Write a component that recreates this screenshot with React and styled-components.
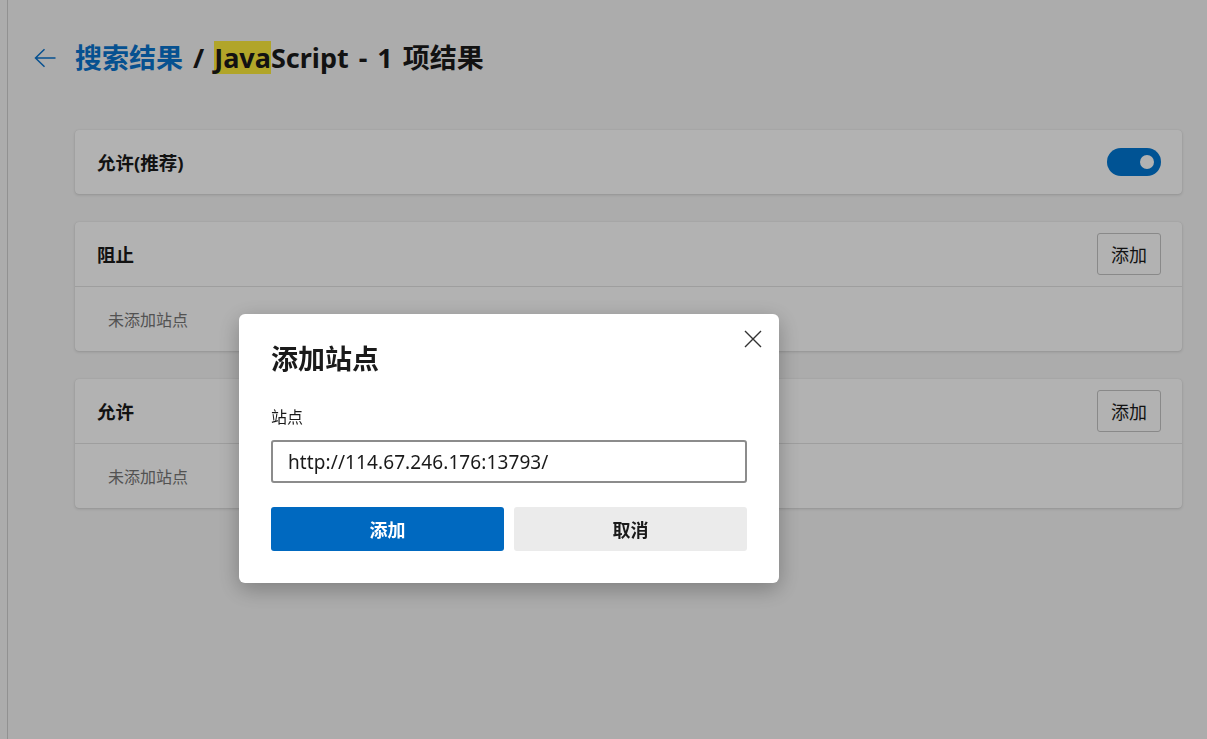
import React from 'react';
import styled, { createGlobalStyle } from 'styled-components';

const GlobalStyle = createGlobalStyle`
    html, body {
        margin: 0;
        padding: 0;
        background: #f6f6f6;
        font-family: "Noto Sans", "Noto Sans CJK SC", sans-serif;
        color: #1a1a1a;
    }
`;

const Page = styled.div`
    display: flex;
    min-height: 100vh;
`;

const Rail = styled.div`
    width: 7px;
    border-right: 1px solid #d0d0d0;
`;

const Main = styled.main`
    flex: 1;
    padding: 40px 25px 0 26px;
`;

const Header = styled.div`
    display: flex;
    align-items: center;
    height: 36px;
`;

const BackButton = styled.button`
    display: flex;
    align-items: center;
    border: none;
    background: none;
    padding: 0;
    margin-right: 19px;
    color: #0a74cf;
    cursor: pointer;
`;

const Title = styled.h1`
    margin: 0;
    font-size: 27px;
    line-height: 36px;
    font-weight: 700;
    word-spacing: 3px;
    white-space: nowrap;
    .crumb {
        color: #0a74cf;
    }
    mark {
        display: inline-block;
        line-height: 33px;
        background: #feec3b;
        color: inherit;
    }
`;

const Cards = styled.div`
    display: flex;
    flex-direction: column;
    gap: 28px;
    margin: 54px 0 0 41px;
`;

const Card = styled.section`
    background: #fff;
    border-radius: 4px;
    box-shadow: 0 1px 3px rgba(0, 0, 0, 0.14), 0 0 1px rgba(0, 0, 0, 0.12);
`;

const CardRow = styled.div`
    display: flex;
    align-items: center;
    justify-content: space-between;
    height: 64px;
    padding: 0 21px 0 22px;
    border-bottom: ${p => (p.$divided ? '1px solid #e3e3e3' : 'none')};
`;

const CardTitle = styled.span`
    font-size: 18.5px;
    font-weight: 700;
`;

const Empty = styled.div`
    display: flex;
    align-items: center;
    height: 64px;
    padding-left: 33px;
    font-size: 16px;
    color: #767676;
`;

const Toggle = styled.span`
    display: flex;
    align-items: center;
    justify-content: flex-end;
    width: 54px;
    height: 28px;
    box-sizing: border-box;
    padding-right: 7px;
    border-radius: 14px;
    background: #0078d4;
    span {
        width: 14px;
        height: 14px;
        border-radius: 50%;
        background: #fff;
    }
`;

const OutlineButton = styled.button`
    width: 64px;
    height: 42px;
    border: 1px solid #c4c4c4;
    border-radius: 3px;
    background: #fff;
    font-family: inherit;
    font-size: 18px;
    color: #1a1a1a;
    padding: 0;
`;

const Overlay = styled.div`
    position: fixed;
    inset: 0;
    background: rgba(0, 0, 0, 0.3);
`;

const Dialog = styled.div`
    position: absolute;
    left: 239px;
    top: 314px;
    width: 540px;
    box-sizing: border-box;
    padding: 27px 32px 32px;
    background: #fff;
    border-radius: 6px;
    box-shadow: 0 6px 22px rgba(0, 0, 0, 0.28);
`;

const CloseButton = styled.button`
    position: absolute;
    top: 13px;
    right: 14px;
    width: 24px;
    height: 24px;
    display: flex;
    align-items: center;
    justify-content: center;
    border: none;
    background: none;
    padding: 0;
    color: #333;
`;

const DialogTitle = styled.h2`
    margin: 0;
    font-size: 27px;
    line-height: 36px;
    font-weight: 700;
`;

const Label = styled.label`
    display: block;
    margin: 29px 0 12px;
    font-size: 16px;
    line-height: 22px;
`;

const Input = styled.input`
    display: block;
    width: 100%;
    height: 43px;
    box-sizing: border-box;
    border: 2px solid #8c8c8c;
    border-radius: 3px;
    padding: 0 15px;
    font-family: inherit;
    font-size: 19px;
    letter-spacing: 0.1px;
    color: #1a1a1a;
    outline: none;
`;

const Actions = styled.div`
    display: grid;
    grid-template-columns: 1fr 1fr;
    gap: 10px;
    margin-top: 24px;
`;

const ActionButton = styled.button`
    height: 44px;
    border: none;
    border-radius: 3px;
    font-family: inherit;
    font-size: 18px;
    font-weight: 700;
    background: ${p => (p.$primary ? '#0069c0' : '#ebebeb')};
    color: ${p => (p.$primary ? '#fff' : '#1a1a1a')};
`;

const sections = [
    { title: '阻止' },
    { title: '允许' },
];

export default function App() {
    return (
        <>
            <GlobalStyle />
            <Page>
                <Rail />
                <Main>
                    <Header>
                        <BackButton aria-label="返回">
                            <svg width="22" height="20" viewBox="0 0 22 20" fill="none" stroke="currentColor" strokeWidth="1.5">
                                <path d="M21.5 10H1.5M10.5 1.3L1.5 10l9 8.7" />
                            </svg>
                        </BackButton>
                        <Title>
                            <span className="crumb">搜索结果</span> / <mark>Java</mark>Script - 1 项结果
                        </Title>
                    </Header>

                    <Cards>
                        <Card>
                            <CardRow>
                                <CardTitle>允许(推荐)</CardTitle>
                                <Toggle><span /></Toggle>
                            </CardRow>
                        </Card>
                        {sections.map(s => (
                            <Card key={s.title}>
                                <CardRow $divided>
                                    <CardTitle>{s.title}</CardTitle>
                                    <OutlineButton>添加</OutlineButton>
                                </CardRow>
                                <Empty>未添加站点</Empty>
                            </Card>
                        ))}
                    </Cards>
                </Main>
            </Page>

            <Overlay>
                <Dialog>
                    <CloseButton aria-label="关闭">
                        <svg width="18" height="18" viewBox="0 0 18 18" stroke="currentColor" strokeWidth="1.4">
                            <path d="M1 1l16 16M17 1L1 17" />
                        </svg>
                    </CloseButton>
                    <DialogTitle>添加站点</DialogTitle>
                    <Label htmlFor="site">站点</Label>
                    <Input id="site" defaultValue="http://114.67.246.176:13793/" />
                    <Actions>
                        <ActionButton $primary>添加</ActionButton>
                        <ActionButton>取消</ActionButton>
                    </Actions>
                </Dialog>
            </Overlay>
        </>
    );
}
